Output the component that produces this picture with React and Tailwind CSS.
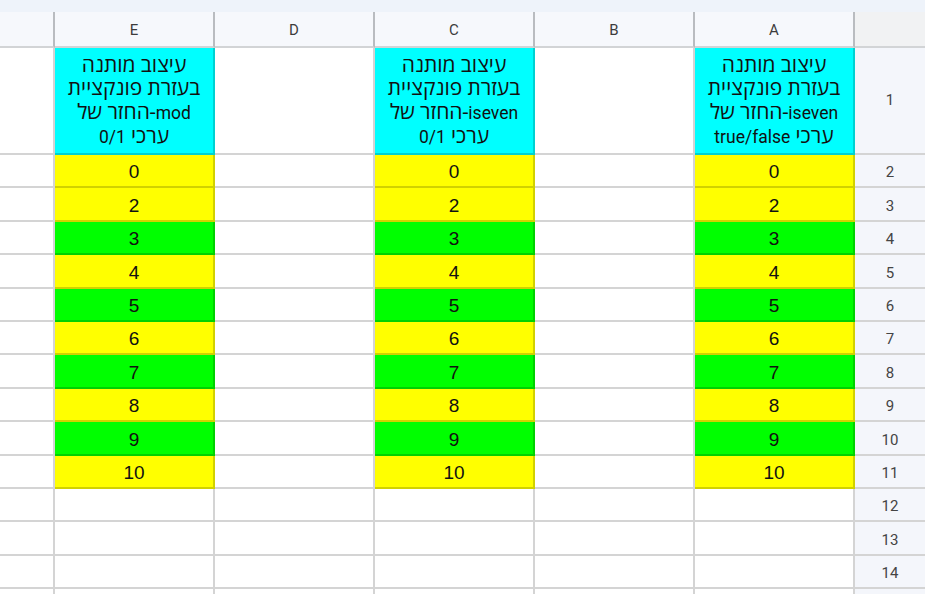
import React from 'react'

const font = { fontFamily: 'Roboto, "Noto Sans", Arial, sans-serif' }
const cellFont = { fontFamily: '"Liberation Sans", Arial, sans-serif' }
const titleFont = { fontFamily: 'Roboto, "Open Sans", "DejaVu Sans", sans-serif' }

const values = [0, 2, 3, 4, 5, 6, 7, 8, 9, 10]

// latin runs are a touch smaller than the hebrew in the sheet
const L = ({ children }) => <span className="text-[17.5px]">{children}</span>

const headers = {
  A: [
    'עיצוב מותנה',
    'בעזרת פונקציית',
    <><L>iseven</L>-החזר של</>,
    <>ערכי <L>true/false</L></>,
  ],
  C: ['עיצוב מותנה', 'בעזרת פונקציית', <><L>iseven</L>-החזר של</>, <>ערכי <L>0/1</L></>],
  E: ['עיצוב מותנה', 'בעזרת פונקציית', <><L>mod</L>-החזר של</>, <>ערכי <L>0/1</L></>],
}

// left to right, as the sheet is shown right-to-left
const columns = [
  { key: 'F', w: 'w-[55px]' },
  { key: 'E', w: 'w-[160px]', filled: true },
  { key: 'D', w: 'w-[160px]' },
  { key: 'C', w: 'w-[160px]', filled: true },
  { key: 'B', w: 'w-[160px]' },
  { key: 'A', w: 'w-[160px]', filled: true },
]

function HeaderRow() {
  return (
    <div className="flex h-[36px]">
      {columns.map((c) => (
        <div
          key={c.key}
          className={`${c.w} shrink-0 bg-[#f6f8fc] border-r-2 border-b-2 border-r-[#b9bcc0] border-b-[#d2d4d6] flex items-center justify-center pt-[3px] text-[15px] text-[#3c3c3c]`}
        >
          {c.key === 'F' ? '' : c.key}
        </div>
      ))}
      <div className="flex-1 bg-[#f1f2f3] border-b-2 border-[#d2d4d6]" />
    </div>
  )
}

function TitleRow() {
  return (
    <div className="flex h-[107px]">
      {columns.map((c) =>
        c.filled ? (
          <div
            key={c.key}
            style={titleFont}
            className={`${c.w} shrink-0 bg-[#00ffff] border-r-2 border-b-2 border-[rgba(0,0,0,0.18)] flex flex-col items-center justify-center pt-[2px] text-[21px] leading-[23.5px] text-[#111] whitespace-nowrap`}
          >
            {headers[c.key].map((line, i) => (
              <div key={i} dir="rtl">
                {line}
              </div>
            ))}
          </div>
        ) : (
          <div key={c.key} className={`${c.w} shrink-0 bg-white border-r-2 border-b-2 border-[#d4d4d4]`} />
        ),
      )}
      <div className="flex-1 bg-[#f4f6fb] border-b-2 border-[#d4d4d4] flex items-center justify-center text-[15px] text-[#444]">
        1
      </div>
    </div>
  )
}

function DataRow({ n, value, label = true }) {
  const bg = value === undefined ? 'bg-white' : value % 2 === 0 ? 'bg-[#ffff00]' : 'bg-[#00ff00]'
  return (
    <div className="flex h-[33.4px]">
      {columns.map((c) =>
        c.filled && value !== undefined ? (
          <div
            key={c.key}
            style={cellFont}
            className={`${c.w} shrink-0 ${bg} border-r-2 border-b-2 border-[rgba(0,0,0,0.18)] flex items-center justify-center pt-[4px] text-[19px] text-[#111]`}
          >
            {value}
          </div>
        ) : (
          <div key={c.key} className={`${c.w} shrink-0 bg-white border-r-2 border-b-2 border-[#d4d4d4]`} />
        ),
      )}
      <div className="flex-1 bg-[#f4f6fb] border-b-2 border-[#d4d4d4] flex items-center justify-center pt-[4px] text-[15px] text-[#444]">
        {label ? n : ''}
      </div>
    </div>
  )
}

export default function App() {
  const rows = []
  for (let n = 2; n <= 15; n++) {
    rows.push(<DataRow key={n} n={n} value={values[n - 2]} label={n < 15} />)
  }

  return (
    <div className="w-[925px] h-[594px] overflow-hidden bg-white" style={font}>
      <div className="h-[12px] bg-[#eef3fa]" />
      <HeaderRow />
      <TitleRow />
      {rows}
    </div>
  )
}
